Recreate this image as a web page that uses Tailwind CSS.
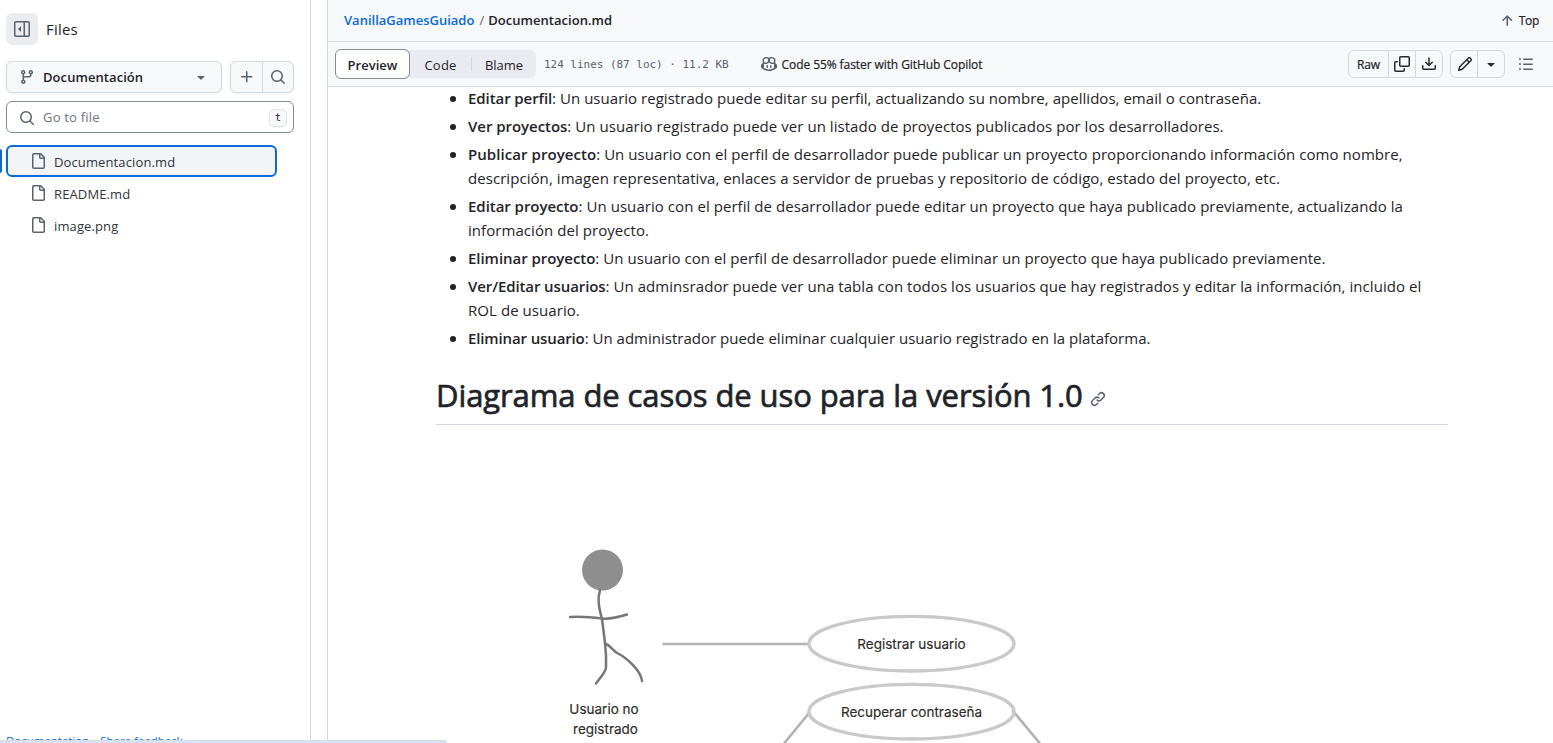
<!DOCTYPE html>
<html lang="es">
<head>
<meta charset="utf-8">
<title>Documentacion.md</title>
<script src="https://cdn.jsdelivr.net/npm/@tailwindcss/browser@4"></script>
</head>
<body class="h-[743px] w-[1553px] overflow-hidden bg-white font-['Open_Sans',sans-serif] text-[#1f2328]">
<svg class="hidden">
  <symbol id="search" viewBox="0 0 16 16"><path d="M10.68 11.74a6 6 0 0 1-7.922-8.982 6 6 0 0 1 8.982 7.922l3.04 3.04a.749.749 0 0 1-.326 1.275.749.749 0 0 1-.734-.215ZM11.5 7a4.499 4.499 0 1 0-8.997 0A4.499 4.499 0 0 0 11.5 7Z"/></symbol>
  <symbol id="caret" viewBox="0 0 16 16"><path d="m4.427 7.427 3.396 3.396a.25.25 0 0 0 .354 0l3.396-3.396A.25.25 0 0 0 11.396 7H4.604a.25.25 0 0 0-.177.427Z"/></symbol>
  <symbol id="file" viewBox="0 0 16 16"><path d="M2 1.75C2 .784 2.784 0 3.75 0h6.586c.464 0 .909.184 1.237.513l2.914 2.914c.329.328.513.773.513 1.237v9.586A1.75 1.75 0 0 1 13.25 16h-9.5A1.75 1.75 0 0 1 2 14.25Zm1.75-.25a.25.25 0 0 0-.25.25v12.5c0 .138.112.25.25.25h9.5a.25.25 0 0 0 .25-.25V6h-2.75A1.75 1.75 0 0 1 9 4.25V1.5Zm6.75.062V4.25c0 .138.112.25.25.25h2.688l-.011-.013-2.914-2.914-.013-.011Z"/></symbol>
</svg>
<div class="flex h-full">
  <aside class="flex h-full w-[311px] shrink-0 flex-col border-r border-[#d1d9e0] pl-1.5 pt-[13px]">
    <div class="flex items-center gap-2">
      <span class="flex size-8 items-center justify-center rounded-md bg-[#eaecf0]"><svg class="size-4 fill-[#59636e]" viewBox="0 0 16 16"><path d="M4.177 7.823A.25.25 0 0 0 4.177 8.177l2.396 2.396A.25.25 0 0 0 7 10.396V5.604a.25.25 0 0 0-.427-.177Z"/><path d="M0 1.75C0 .784.784 0 1.75 0h12.5C15.216 0 16 .784 16 1.75v12.5A1.75 1.75 0 0 1 14.25 16H1.75A1.75 1.75 0 0 1 0 14.25Zm1.75-.25a.25.25 0 0 0-.25.25v12.5c0 .138.112.25.25.25H9.5v-13Zm12.5 13a.25.25 0 0 0 .25-.25V1.75a.25.25 0 0 0-.25-.25H11v13Z"/></svg></span>
      <h2 class="text-[15px] font-medium tracking-[0.2px]">Files</h2>
    </div>
    <div class="mt-4 flex gap-2">
      <div class="flex h-8 w-[216px] items-center rounded-md border border-[#d1d9e0] bg-[#f6f8fa] px-3 shadow-xs">
        <svg class="size-4 fill-[#59636e]" viewBox="0 0 16 16"><path d="M9.5 3.25a2.25 2.25 0 1 1 3 2.122V6A2.5 2.5 0 0 1 10 8.5H6a1 1 0 0 0-1 1v1.128a2.251 2.251 0 1 1-1.5 0V5.372a2.25 2.25 0 1 1 1.5 0v1.836A2.493 2.493 0 0 1 6 7h4a1 1 0 0 0 1-1v-.628A2.25 2.25 0 0 1 9.5 3.25Zm-6 0a.75.75 0 1 0 1.5 0 .75.75 0 0 0-1.5 0Zm8.25-.75a.75.75 0 1 0 0 1.5.75.75 0 0 0 0-1.5ZM4.25 12a.75.75 0 1 0 0 1.5.75.75 0 0 0 0-1.5Z"/></svg>
        <span class="ml-2 pt-px text-[13px] font-semibold tracking-[0.07px]">Documentación</span>
        <svg class="ml-auto size-4 fill-[#59636e]"><use href="#caret"/></svg>
      </div>
      <div class="flex h-8 w-16 rounded-md border border-[#d1d9e0] bg-[#f6f8fa] shadow-xs">
        <span class="flex w-8 items-center justify-center border-r border-[#d1d9e0]"><svg class="size-4 fill-[#59636e]" viewBox="0 0 16 16"><path d="M7.75 2a.75.75 0 0 1 .75.75V7h4.25a.75.75 0 0 1 0 1.5H8.5v4.25a.75.75 0 0 1-1.5 0V8.5H2.75a.75.75 0 0 1 0-1.5H7V2.75A.75.75 0 0 1 7.75 2Z"/></svg></span>
        <span class="flex flex-1 items-center justify-center"><svg class="size-4 fill-[#59636e]"><use href="#search"/></svg></span>
      </div>
    </div>
    <div class="mt-2 flex h-8 w-72 items-center rounded-md border border-[#818b98] bg-white pl-3 pr-1.5">
      <svg class="mt-px size-4 fill-[#59636e]"><use href="#search"/></svg>
      <span class="ml-2 pt-0.5 text-[13px] tracking-[0.2px] text-[#6b747e]">Go to file</span>
      <span class="ml-auto mt-px flex size-[18px] items-center justify-center rounded-[5px] border border-[#e2e6ea] bg-[#f6f8fa] pb-px font-['DejaVu_Sans_Mono',monospace] text-[10px] shadow-xs">t</span>
    </div>
    <div class="mt-3 flex flex-col text-[13px] tracking-[0.12px] text-[#30363c]">
      <div class="-ml-1.5 flex items-center gap-1"><span class="h-6 w-0.5 rounded-r bg-[#0969da]"></span><div class="flex h-8 w-[271px] items-center rounded-md border-2 border-[#0969da] bg-[#f3f4f6] pl-[22px]"><svg class="size-4 fill-[#59636e]"><use href="#file"/></svg><span class="ml-2 pt-[3px]">Documentacion.md</span></div></div>
      <div class="flex h-8 items-center pl-6"><svg class="size-4 fill-[#59636e]"><use href="#file"/></svg><span class="ml-2 pt-[3px]">README.md</span></div>
      <div class="flex h-8 items-center pl-6"><svg class="size-4 fill-[#59636e]"><use href="#file"/></svg><span class="ml-2 pt-[3px]">image.png</span></div>
    </div>
    <div class="mt-auto flex h-[9px] gap-[11px] overflow-hidden text-[11.5px] leading-[14px] tracking-[-0.02px] text-[#0969da]"><span>Documentation</span><span>Share feedback</span></div>
  </aside>
  <main class="ml-4 flex h-full flex-1 flex-col border-l border-[#d1d9e0]">
    <header class="flex h-[42px] shrink-0 items-center border-b border-[#d1d9e0] bg-[#f6f8fa] pl-4 pr-3.5 text-[13px]">
      <span class="font-semibold text-[#0969da]">VanillaGamesGuiado</span><span class="pl-[5px] pr-1 text-[#59636e]">/</span><span class="font-semibold tracking-[0.04px]">Documentacion.md</span>
      <span class="ml-auto flex items-center gap-1 text-xs"><svg class="size-4 fill-[#59636e]" viewBox="0 0 16 16"><path d="M3.47 7.78a.75.75 0 0 1 0-1.06l4.25-4.25a.75.75 0 0 1 1.06 0l4.25 4.25a.751.751 0 0 1-.018 1.042.751.751 0 0 1-1.042.018L9 4.81v7.44a.75.75 0 0 1-1.5 0V4.81L4.53 7.78a.75.75 0 0 1-1.06 0Z"/></svg><span class="font-medium tracking-[-0.3px] [-webkit-text-stroke:0.2px]">Top</span></span>
    </header>
    <div class="flex h-[45px] shrink-0 items-center border-b border-[#d1d9e0] bg-[#f6f8fa] pl-[7px] pr-[19px]">
      <div class="flex h-7 w-[201px] items-center rounded-md bg-[#e9ebf0] text-[13px]">
        <span class="flex h-[30px] w-[75px] items-center justify-center rounded-md border border-[#818b98] bg-white pt-[3px] font-semibold">Preview</span>
        <span class="flex w-[61px] justify-center pt-[3px] tracking-[0.2px]">Code</span>
        <span class="h-3.5 w-px bg-[#d1d9e0]"></span>
        <span class="flex w-16 justify-center pt-[3px]">Blame</span>
      </div>
      <span class="ml-2 whitespace-pre pt-0.5 font-['DejaVu_Sans_Mono',monospace] text-[11px] tracking-[-0.03px] text-[#59636e]">124 lines (87 loc) · 11.2 KB</span>
      <svg class="ml-8 size-4 fill-[#59636e]" viewBox="0 0 16 16"><path d="M7.998 15.035c-4.562 0-7.873-2.914-7.998-3.749V9.338c.085-.628.677-1.686 1.588-2.065.013-.07.024-.143.036-.218.029-.183.06-.384.126-.612-.201-.508-.254-1.084-.254-1.656 0-.87.128-1.769.693-2.484.579-.733 1.494-1.124 2.724-1.261 1.206-.134 2.262.034 2.944.765.05.053.096.108.139.165.044-.057.094-.112.143-.165.682-.731 1.738-.899 2.944-.765 1.23.137 2.145.528 2.724 1.261.566.715.693 1.614.693 2.484 0 .572-.053 1.148-.254 1.656.066.228.098.429.126.612.012.076.024.148.037.218.924.385 1.522 1.471 1.591 2.095v1.872c0 .766-3.351 3.795-8.002 3.795Zm0-1.485c2.28 0 4.584-1.11 5.002-1.433V7.862l-.023-.116c-.49.21-1.075.291-1.727.291-1.146 0-2.059-.327-2.71-.991A3.222 3.222 0 0 1 8 6.303a3.24 3.24 0 0 1-.544.743c-.65.664-1.563.991-2.71.991-.652 0-1.236-.081-1.727-.291l-.023.116v4.255c.419.323 2.722 1.433 5.002 1.433ZM6.762 2.83c-.193-.206-.637-.413-1.682-.297-1.019.113-1.479.404-1.713.7-.247.312-.369.789-.369 1.554 0 .793.129 1.171.308 1.371.162.181.519.379 1.442.379.853 0 1.339-.235 1.638-.54.315-.322.527-.827.617-1.553.117-.935-.037-1.395-.241-1.614Zm4.155-.297c-1.044-.116-1.488.091-1.681.297-.204.219-.359.679-.242 1.614.091.726.303 1.231.618 1.553.299.305.784.54 1.638.54.922 0 1.28-.198 1.442-.379.179-.2.308-.578.308-1.371 0-.765-.123-1.242-.37-1.554-.233-.296-.693-.587-1.713-.7Z"/><path d="M6.25 9.037a.75.75 0 0 1 .75.75v1.501a.75.75 0 0 1-1.5 0V9.787a.75.75 0 0 1 .75-.75Zm4.25.75v1.501a.75.75 0 0 1-1.5 0V9.787a.75.75 0 0 1 1.5 0Z"/></svg>
      <span class="ml-[5px] pt-0.5 text-xs font-medium tracking-[-0.08px] [-webkit-text-stroke:0.2px]">Code 55% faster with GitHub Copilot</span>
      <div class="ml-auto flex h-7 w-[95px] rounded-md border border-[#d1d9e0] text-xs">
        <span class="flex w-10 items-center justify-center border-r border-[#d1d9e0] pt-0.5 font-medium tracking-[-0.1px] [-webkit-text-stroke:0.2px]">Raw</span>
        <span class="flex w-[27px] items-center justify-center border-r border-[#d1d9e0]"><svg class="size-4 fill-[#25292e]" viewBox="0 0 16 16"><path d="M0 6.75C0 5.784.784 5 1.75 5h1.5a.75.75 0 0 1 0 1.5h-1.5a.25.25 0 0 0-.25.25v7.5c0 .138.112.25.25.25h7.5a.25.25 0 0 0 .25-.25v-1.5a.75.75 0 0 1 1.5 0v1.5A1.75 1.75 0 0 1 9.25 16h-7.5A1.75 1.75 0 0 1 0 14.25Z"/><path d="M5 1.75C5 .784 5.784 0 6.75 0h7.5C15.216 0 16 .784 16 1.75v7.5A1.75 1.75 0 0 1 14.25 11h-7.5A1.75 1.75 0 0 1 5 9.25Zm1.75-.25a.25.25 0 0 0-.25.25v7.5c0 .138.112.25.25.25h7.5a.25.25 0 0 0 .25-.25v-7.5a.25.25 0 0 0-.25-.25Z"/></svg></span>
        <span class="flex flex-1 items-center justify-center"><svg class="size-4 fill-[#25292e]" viewBox="0 0 16 16"><path d="M2.75 14A1.75 1.75 0 0 1 1 12.25v-2.5a.75.75 0 0 1 1.5 0v2.5c0 .138.112.25.25.25h10.5a.25.25 0 0 0 .25-.25v-2.5a.75.75 0 0 1 1.5 0v2.5A1.75 1.75 0 0 1 13.25 14Z"/><path d="M7.25 7.689V2a.75.75 0 0 1 1.5 0v5.689l1.97-1.969a.749.749 0 1 1 1.06 1.06l-3.25 3.25a.749.749 0 0 1-1.06 0L4.22 6.78a.749.749 0 1 1 1.06-1.06l1.97 1.969Z"/></svg></span>
      </div>
      <div class="ml-[7px] flex h-7 w-[55px] rounded-md border border-[#d1d9e0]">
        <span class="flex w-[27px] items-center justify-center border-r border-[#d1d9e0] pl-px"><svg class="size-4 fill-[#25292e]" viewBox="0 0 16 16"><path d="M11.013 1.427a1.75 1.75 0 0 1 2.474 0l1.086 1.086a1.75 1.75 0 0 1 0 2.474l-8.61 8.61c-.21.21-.47.364-.756.445l-3.251.93a.75.75 0 0 1-.927-.928l.929-3.25c.081-.286.235-.547.445-.758l8.61-8.61Zm.176 4.823L9.75 4.81l-6.286 6.287a.253.253 0 0 0-.064.108l-.558 1.953 1.953-.558a.253.253 0 0 0 .108-.064Zm1.238-3.763a.25.25 0 0 0-.354 0L10.811 3.75l1.439 1.44 1.263-1.263a.25.25 0 0 0 0-.354Z"/></svg></span>
        <span class="flex flex-1 items-center justify-center"><svg class="size-4 fill-[#25292e]"><use href="#caret"/></svg></span>
      </div>
      <svg class="ml-[13px] size-4 fill-[#59636e]" viewBox="0 0 16 16"><path d="M5.75 2.5h8.5a.75.75 0 0 1 0 1.5h-8.5a.75.75 0 0 1 0-1.5Zm0 5h8.5a.75.75 0 0 1 0 1.5h-8.5a.75.75 0 0 1 0-1.5Zm0 5h8.5a.75.75 0 0 1 0 1.5h-8.5a.75.75 0 0 1 0-1.5ZM2 14a1 1 0 1 1 0-2 1 1 0 0 1 0 2Zm1-6a1 1 0 1 1-2 0 1 1 0 0 1 2 0ZM2 4a1 1 0 1 1 0-2 1 1 0 0 1 0 2Z"/></svg>
    </div>
    <article class="-mt-px ml-[108px] w-[1012px]">
      <ul class="flex list-disc flex-col gap-1 whitespace-nowrap pl-8 text-[15px] leading-6 tracking-[0.06px] marker:text-[16px]">
        <li><b class="font-semibold tracking-[-0.08px]">Editar perfil</b><span class="tracking-[0.03px]">: Un usuario registrado puede editar su perfil, actualizando su nombre, apellidos, email o contraseña.</span></li>
        <li><b class="font-semibold tracking-[-0.04px]">Ver proyectos</b><span class="tracking-[0.05px]">: Un usuario registrado puede ver un listado de proyectos publicados por los desarrolladores.</span></li>
        <li><b class="font-semibold">Publicar proyecto</b>: Un usuario con el perfil de desarrollador puede publicar un proyecto proporcionando información como nombre,<br>descripción, imagen representativa, enlaces a servidor de pruebas y repositorio de código, estado del proyecto, etc.</li>
        <li><b class="font-semibold tracking-[-0.04px]">Editar proyecto</b>: Un usuario con el perfil de desarrollador puede editar un proyecto que haya publicado previamente, actualizando la<br>información del proyecto.</li>
        <li><b class="font-semibold tracking-[-0.04px]">Eliminar proyecto</b><span class="tracking-[0.05px]">: Un usuario con el perfil de desarrollador puede eliminar un proyecto que haya publicado previamente.</span></li>
        <li><b class="font-semibold tracking-[-0.1px]">Ver/Editar usuarios</b>: Un adminsrador puede ver una tabla con todos los usuarios que hay registrados y editar la información, incluido el<br>ROL de usuario.</li>
        <li><b class="font-semibold tracking-[-0.13px]">Eliminar usuario</b><span class="tracking-[0.01px]">: Un administrador puede eliminar cualquier usuario registrado en la plataforma.</span></li>
      </ul>
      <h1 class="mt-[25px] flex h-[50px] items-start border-b border-[#d1d9e0] text-[31px] font-medium leading-[41px]"><span class="w-[647px] whitespace-nowrap tracking-[-0.09px] [-webkit-text-stroke:0.7px]">Diagrama de casos de uso para la versión 1.0</span><svg class="ml-[7px] mt-4 size-4 fill-[#59636e]" viewBox="0 0 16 16"><path d="m7.775 3.275 1.25-1.25a3.5 3.5 0 1 1 4.95 4.95l-2.5 2.5a3.5 3.5 0 0 1-4.95 0 .751.751 0 0 1 .018-1.042.751.751 0 0 1 1.042-.018 1.998 1.998 0 0 0 2.83 0l2.5-2.5a2.002 2.002 0 0 0-2.83-2.83l-1.25 1.25a.751.751 0 0 1-1.042-.018.751.751 0 0 1-.018-1.042Zm-4.69 9.64a1.998 1.998 0 0 0 2.83 0l1.25-1.25a.751.751 0 0 1 1.042.018.751.751 0 0 1 .018 1.042l-1.25 1.25a3.5 3.5 0 1 1-4.95-4.95l2.5-2.5a3.5 3.5 0 0 1 4.95 0 .751.751 0 0 1-.018 1.042.751.751 0 0 1-1.042.018 1.998 1.998 0 0 0-2.83 0l-2.5 2.5a1.998 1.998 0 0 0 0 2.83Z"/></svg></h1>
      <svg class="mt-[15px] h-[303px] w-[1012px] font-['Inter',sans-serif]" viewBox="436 440 1012 303" fill="none" stroke-linecap="round" stroke-linejoin="round">
        <circle cx="602.5" cy="570" r="20.5" fill="#8e8e8e"/>
        <g stroke="#767676" stroke-width="2.5"><path d="M600 590C597 599 599 608 602 619L605 643Q606.500 656 606 668C605 673 600 678 596 683.500"/><path d="M570 617C581 616 591 617 602 618.500C611 619.500 619 617 627 614.500"/><path d="M606 644C611 646 613 651 618 653.500C627 658 641 671 642 681"/></g>
        <g stroke="#b3b3b3" stroke-width="2.6"><path d="M663.500 644H808"/><path d="M809 713L782 746"/><path d="M1013 711L1042 746"/></g>
        <g stroke="#c9c9c9" stroke-width="3.3"><ellipse cx="911.5" cy="643.7" rx="102.5" ry="27.3"/><ellipse cx="911.5" cy="711.7" rx="102.5" ry="27.3"/></g>
        <g fill="#2b2b2b" stroke="#2b2b2b" stroke-width="0.15" font-size="13.5" text-anchor="middle"><text x="604" y="714">Usuario no</text><text x="605.5" y="734">registrado</text><text x="911.5" y="649">Registrar usuario</text><text x="911.5" y="717">Recuperar contraseña</text></g>
      </svg>
    </article>
  </main>
</div>
<div class="fixed bottom-0 left-0 h-[3px] w-[447px] rounded-tr-[3px] border-t border-[#dadce0] bg-[#d3e3fd]"></div>
</body>
</html>
